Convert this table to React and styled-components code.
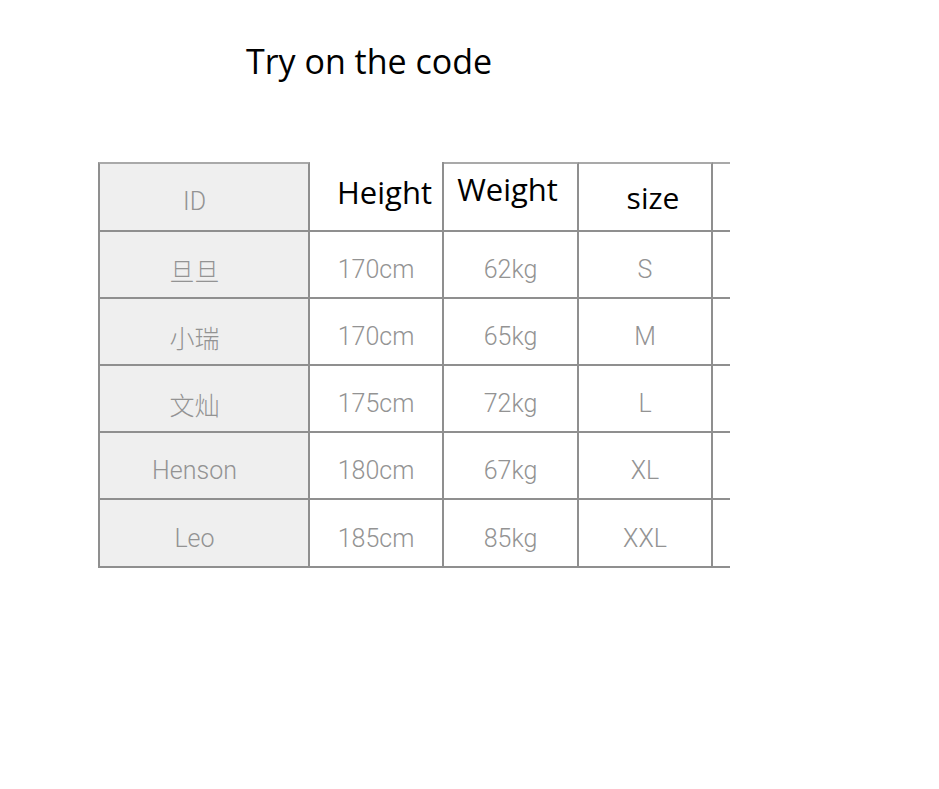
import React from "react";
import styled, { createGlobalStyle } from "styled-components";

const GlobalStyle = createGlobalStyle`
  html, body {
    margin: 0;
    padding: 0;
    background: #ffffff;
  }
  body {
    font-family: "Open Sans", "Noto Sans", sans-serif;
  }
`;

const Page = styled.div`
  width: 939px;
  min-height: 789px;
  padding-top: 38px;
  box-sizing: border-box;
`;

const Title = styled.h1`
  margin: 0 0 0 246px;
  font-family: "Open Sans", "Noto Sans", sans-serif;
  font-weight: 400;
  font-size: 34px;
  line-height: 46px;
  color: #000;
`;

const Table = styled.div`
  margin: 78px 0 0 98px;
  display: grid;
  grid-template-columns: 212px 134px 135px 134px 17px;
  grid-template-rows: 70px 67px 67px 67px 67px 68px;
  width: max-content;
`;

const Cell = styled.div`
  box-sizing: border-box;
  display: flex;
  justify-content: center;
  align-items: center;
  border-bottom: 2px solid #8f8f8f;
  border-right: ${(p) => (p.$last ? "none" : "2px solid #8f8f8f")};
  border-left: ${(p) => (p.$first ? "2px solid #8f8f8f" : "none")};
  border-top: ${(p) => (p.$top ? "2px solid #a9a9a9" : "none")};
  background: ${(p) => (p.$shade ? "#efefef" : "#ffffff")};
  padding-top: ${(p) => (p.$dy != null ? p.$dy : 10)}px;
  padding-right: ${(p) => (p.$first ? "19px" : "0")};
  font-family: Roboto, "Noto Sans CJK SC", sans-serif;
  font-weight: 300;
  font-size: 25px;
  color: #939393;
`;

const HeadCell = styled.div`
  box-sizing: border-box;
  display: flex;
  justify-content: center;
  align-items: flex-start;
  border-bottom: 2px solid #8f8f8f;
  border-right: ${(p) => (p.$last ? "none" : "2px solid #8f8f8f")};
  border-top: ${(p) => (p.$top ? "2px solid #a9a9a9" : "none")};
  padding-top: ${(p) => p.$dy}px;
  padding-left: ${(p) => Math.max(p.$dx, 0)}px;
  padding-right: ${(p) => Math.max(-p.$dx, 0)}px;
  font-family: "Open Sans", "Noto Sans", sans-serif;
  font-weight: 400;
  font-size: ${(p) => p.$size}px;
  line-height: normal;
  color: #000;
`;

const rows = [
  ["旦旦", "170cm", "62kg", "S"],
  ["小瑞", "170cm", "65kg", "M"],
  ["文灿", "175cm", "72kg", "L"],
  ["Henson", "180cm", "67kg", "XL"],
  ["Leo", "185cm", "85kg", "XXL"],
];

export default function App() {
  return (
    <Page>
      <GlobalStyle />
      <Title>Try on the code</Title>
      <Table>
        <Cell $first $top $shade $dy={9}>ID</Cell>
        <HeadCell $dy={9} $dx={17} $size={31}>Height</HeadCell>
        <HeadCell $top $dy={4} $dx={-6} $size={31}>Weight</HeadCell>
        <HeadCell $top $dy={13} $dx={16} $size={30}>size</HeadCell>
        <HeadCell $top $last $dy={0} $dx={0} $size={30} />
        {rows.map((r) => (
          <React.Fragment key={r[0]}>
            <Cell $first $shade>{r[0]}</Cell>
            <Cell>{r[1]}</Cell>
            <Cell>{r[2]}</Cell>
            <Cell>{r[3]}</Cell>
            <Cell $last />
          </React.Fragment>
        ))}
      </Table>
    </Page>
  );
}
